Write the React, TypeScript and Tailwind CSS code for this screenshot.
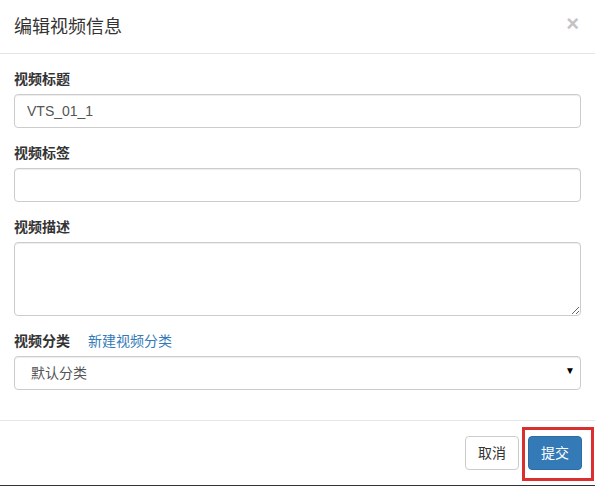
const font = { fontFamily: '"Liberation Sans", "Noto Sans CJK SC", sans-serif' };

function Label({ children }: { children: React.ReactNode }) {
  return <label className="mb-[5px] block text-[14px] font-bold leading-5 text-[#333]">{children}</label>;
}

const inputCls =
  "block h-[34px] w-full rounded-[4px] border border-[#ccc] bg-white px-3 text-[14px] leading-5 text-[#555] shadow-[inset_0_1px_1px_rgba(0,0,0,0.075)] outline-none";

export default function App() {
  return (
    <div className="relative h-[486px] w-[595px] overflow-hidden bg-white" style={font}>
      <div className="flex h-[54px] items-center justify-between border-b border-[#e5e5e5] px-[14px]">
        <h4 className="text-[18px] font-normal leading-[26px] text-[#333]">编辑视频信息</h4>
        <button type="button" className="-mt-[6px] mr-[2px] text-[22px] font-bold leading-none text-[#c4c4c4]">
          ×
        </button>
      </div>

      <div className="flex flex-col gap-[15px] px-[14px] pb-[15px] pt-[15px]">
        <div>
          <Label>视频标题</Label>
          <input className={inputCls} defaultValue="VTS_01_1" />
        </div>
        <div>
          <Label>视频标签</Label>
          <input className={inputCls} />
        </div>
        <div>
          <Label>视频描述</Label>
          <textarea
            rows={3}
            className="block h-[74px] w-full rounded-[4px] border border-[#ccc] bg-white px-3 py-[6px] text-[14px] leading-5 text-[#555] shadow-[inset_0_1px_1px_rgba(0,0,0,0.075)] outline-none"
          />
        </div>
        <div className="mb-[15px]">
          <div className="mb-[5px] flex items-center gap-[18px] leading-5">
            <span className="text-[14px] font-bold text-[#333]">视频分类</span>
            <a className="text-[14px] text-[#337ab7]">新建视频分类</a>
          </div>
          <div className="relative">
            <div className={inputCls + " flex items-center pl-4"}>默认分类</div>
            <span className="absolute right-[6px] top-[10px] text-[10px] leading-none text-black">▼</span>
          </div>
        </div>
      </div>

      <div className="flex justify-end gap-[9px] border-t border-[#e5e5e5] px-[13px] py-[15px]">
        <button
          type="button"
          className="h-[34px] rounded-[4px] border border-[#ccc] bg-white px-3 text-[14px] leading-5 text-[#333]"
        >
          取消
        </button>
        <button
          type="button"
          className="h-[34px] rounded-[4px] border border-[#2e6da4] bg-[#337ab7] px-3 text-[14px] leading-5 text-white"
        >
          提交
        </button>
      </div>

      <div className="absolute left-[522px] top-[427px] h-[54px] w-[72px] border-[3px] border-[#d9302f]" />
      <div className="absolute bottom-0 left-0 h-px w-full bg-[#333]" />
    </div>
  );
}
